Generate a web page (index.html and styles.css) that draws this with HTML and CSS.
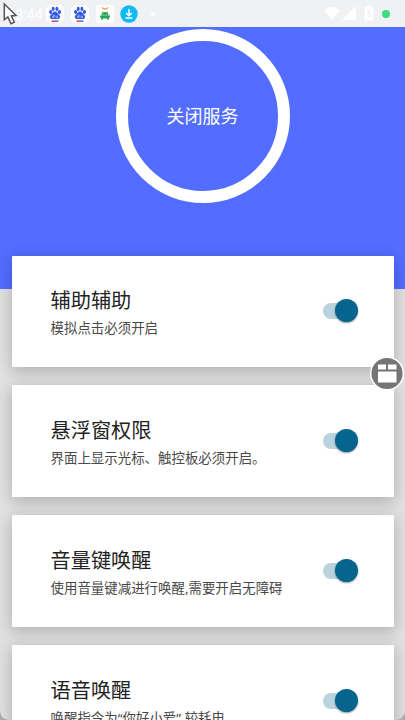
FILE: index.html
```
<!DOCTYPE html>
<html lang="zh-CN">
<head>
<meta charset="utf-8">
<title>辅助服务</title>
<link rel="stylesheet" href="styles.css">
</head>
<body>
<div class="screen">
  <header class="status">
    <span class="clock">3:44</span>
    <span class="app"><svg width="18" height="18" viewBox="0 0 18 18"><g fill="#3159df"><ellipse cx="4.700" cy="7" rx="1.600" ry="2.100"/><ellipse cx="7.200" cy="3.900" rx="1.500" ry="2.100"/><ellipse cx="10.900" cy="3.900" rx="1.500" ry="2.100"/><ellipse cx="13.400" cy="7" rx="1.600" ry="2.100"/><path d="M9 6.400c2.200 0 2.600 2.200 4 3.300 2.100 1.600 1 4.300-1.200 4.300H6.200C4 14 2.900 11.300 5 9.700c1.400-1.100 1.800-3.300 4-3.300z"/></g><path d="M8 9.500v3H6.700v-1.600H8M10 10.600v1.900h1.500v-1.900" fill="none" stroke="#c6d3ff" stroke-width=".7"/><path d="M5.500 16.200H9" stroke="#e9414b" stroke-width="1.500"/><path d="M9 16.200h3.500" stroke="#4870e5" stroke-width="1.500"/></svg></span>
    <span class="app"><svg width="18" height="18" viewBox="0 0 18 18"><g fill="#3159df"><ellipse cx="4.700" cy="7" rx="1.600" ry="2.100"/><ellipse cx="7.200" cy="3.900" rx="1.500" ry="2.100"/><ellipse cx="10.900" cy="3.900" rx="1.500" ry="2.100"/><ellipse cx="13.400" cy="7" rx="1.600" ry="2.100"/><path d="M9 6.400c2.200 0 2.600 2.200 4 3.300 2.100 1.600 1 4.300-1.200 4.300H6.200C4 14 2.900 11.300 5 9.700c1.400-1.100 1.800-3.300 4-3.300z"/></g><path d="M8 9.500v3H6.700v-1.600H8M10 10.600v1.900h1.500v-1.900" fill="none" stroke="#c6d3ff" stroke-width=".7"/><path d="M5.500 16.200H9" stroke="#e9414b" stroke-width="1.500"/><path d="M9 16.200h3.500" stroke="#4870e5" stroke-width="1.500"/></svg></span>
    <span class="app app-square"><svg width="18" height="18" viewBox="0 0 18 18"><path d="M5.800 2.600Q9 5.400 12.200 2.600" fill="none" stroke="#f0a04b" stroke-width="1.300"/><path d="M5.500 10.300a3.500 3.300 0 0 1 7 0zM4 10.600h10v1.600H4zM5 12h8v2.600h-2V13.500H7v1.100H5z" fill="#24a650"/><path d="M6.200 6.500l1 1.500M11.800 6.500l-1 1.500" stroke="#24a650" stroke-width=".8"/><path d="M7.300 9.200h.8M9.900 9.200h.8" stroke="#fff" stroke-width=".8"/></svg></span>
    <svg class="download" width="18" height="18" viewBox="0 0 18 18"><circle cx="9" cy="9" r="8.700" fill="#10b9f4"/><path d="M9 4v6.500M6.200 8l2.800 2.800L11.800 8M5.500 13h7" fill="none" stroke="#fff" stroke-width="1.500"/></svg>
    <i class="more"></i>
    <svg class="system" width="54" height="18" viewBox="0 0 54 18"><g fill="#fff"><path d="M0 5Q8-.8 16 5L8 15z"/><path d="M32 1v14H18z"/><path d="M43 2V.5h4V2h2.500v13.500h-9V2z"/></g><path d="M45.500 5l-2 4h3l-2 4" fill="none" stroke="#e7e9ec"/></svg>
    <i class="online"></i>
    <svg class="cursor" width="20" height="26" viewBox="0 0 20 26"><path d="M4.300 4v15.800l3.600-2.900 3.100 6.800 3.300-1.500-3-6.300 4.700-.5z" fill="#fff" stroke="#555" stroke-width="1.500"/></svg>
  </header>
  <section class="hero"><div class="ring">关闭服务</div></section>
  <main class="cards">
    <article class="card"><div><h2>辅助辅助</h2><p>模拟点击必须开启</p></div><span class="switch"></span></article>
    <article class="card"><div><h2>悬浮窗权限</h2><p>界面上显示光标、触控板必须开启。</p></div><span class="switch"></span></article>
    <article class="card"><div><h2>音量键唤醒</h2><p>使用音量键减进行唤醒,需要开启无障碍</p></div><span class="switch"></span></article>
    <article class="card"><div><h2>语音唤醒</h2><p>唤醒指令为“你好小爱”,较耗电</p></div><span class="switch"></span></article>
  </main>
  <svg class="float" width="36" height="36" viewBox="0 0 36 36"><circle cx="18" cy="17.500" r="16.300" fill="#757575" stroke="#fff" stroke-width="1.500"/><path d="M9 8.500h8v5H9zM19 8.500h8.500v5H19zM9 15.500h18.500v11H9z" fill="#fff"/></svg>
</div>
</body>
</html>
```
FILE: styles.css
```
* { box-sizing: border-box; }
body { margin: 0; background: #aaa; }
.screen {
  position: relative;
  width: 405px;
  height: 720px;
  overflow: hidden;
  background: #dfdfdf;
  border-radius: 0 0 9px 9px;
  font-family: "Noto Sans", "Noto Sans CJK SC", sans-serif;
}
.status {
  position: relative;
  display: flex;
  align-items: center;
  height: 27px;
  padding: 1px 15px 0 12px;
  background: #eff1f3;
}
.clock { width: 34px; padding-top: 2px; color: #fff; font: 14px/18px Roboto, sans-serif; text-align: center; white-space: nowrap; }
.app { width: 18px; height: 18px; margin-right: 7px; border-radius: 5px; background: #fff; }
.app-square { border-radius: 2px; }
.app svg { display: block; }
.download { margin-left: -1px; }
.more { width: 4px; height: 4px; margin-left: 13px; border-radius: 50%; background: #fff; }
.system { margin-left: auto; }
.online { width: 8px; height: 8px; margin-left: 4px; border-radius: 50%; background: #3bdc84; }
.cursor { position: absolute; left: 0; top: 0; }
.hero {
  display: flex;
  justify-content: center;
  height: 262px;
  padding-top: 2px;
  background: #526dff;
}
.ring {
  display: flex;
  align-items: center;
  justify-content: center;
  width: 174px;
  height: 174px;
  padding-bottom: 2px;
  border: 12px solid #fff;
  border-radius: 50%;
  color: #fff;
  font-size: 18px;
}
.cards {
  display: grid;
  grid-template-rows: 110.500px 112.300px 112.300px 112.300px;
  gap: 18px;
  margin: -33px 11.500px 0;
}
.card {
  display: flex;
  align-items: center;
  justify-content: space-between;
  padding: 0 35.500px 0 39px;
  background: #fff;
  border-radius: 1px;
  box-shadow: 0 6px 14px rgba(0, 0, 0, .13), 0 0 16px rgba(0, 0, 0, .1);
}
.card div { padding-top: 4px; }
h2, p { margin: 0; font-weight: 400; white-space: nowrap; }
h2 { color: #222; font-size: 20.200px; line-height: 31px; }
p { color: #484848; font-size: 13.450px; line-height: 25px; }
.switch { position: relative; width: 35px; height: 24px; }
.switch::before {
  content: "";
  position: absolute;
  left: 0;
  top: 4px;
  width: 30px;
  height: 16px;
  border-radius: 8px;
  background: #b9d4df;
}
.switch::after {
  content: "";
  position: absolute;
  right: 0;
  top: 0;
  width: 23px;
  height: 23px;
  border-radius: 50%;
  background: #06658e;
  box-shadow: 0 1px 2px rgba(0, 0, 0, .4);
}
.float { position: absolute; left: 369px; top: 356px; }
```
